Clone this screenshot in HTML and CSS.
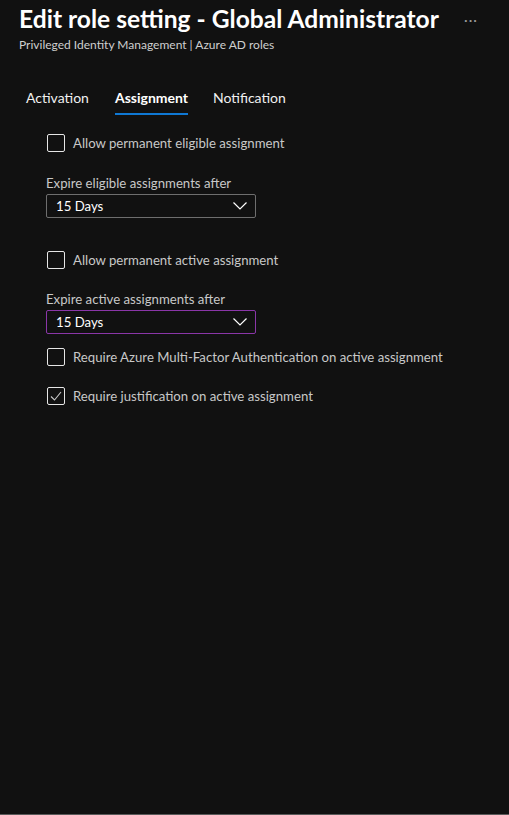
FILE: index.html
```html
<!DOCTYPE html>
<html>
<head>
<meta charset="utf-8">
<link rel="stylesheet" href="styles.css">
</head>
<body>
<div class="page">
  <header class="header">
    <div class="title-row">
      <h1 class="title">Edit role setting - Global Administrator</h1>
      <span class="more">&middot;&middot;&middot;</span>
    </div>
    <div class="subtitle">Privileged Identity Management | Azure AD roles</div>
  </header>

  <nav class="tabs">
    <span class="tab">Activation</span>
    <span class="tab active">Assignment</span>
    <span class="tab">Notification</span>
  </nav>

  <section class="form">
    <label class="check">
      <span class="box"></span>
      <span class="check-label">Allow permanent eligible assignment</span>
    </label>

    <div class="field">
      <div class="field-label">Expire eligible assignments after</div>
      <div class="select">
        <span>15 Days</span>
        <svg class="chev" width="14" height="8" viewBox="0 0 14 8"><path d="M0.5 0.5 L7 7 L13.5 0.5" fill="none" stroke="#fff" stroke-width="1.2"/></svg>
      </div>
    </div>

    <label class="check gap-top">
      <span class="box"></span>
      <span class="check-label">Allow permanent active assignment</span>
    </label>

    <div class="field field-tight">
      <div class="field-label">Expire active assignments after</div>
      <div class="select focused">
        <span>15 Days</span>
        <svg class="chev" width="14" height="8" viewBox="0 0 14 8"><path d="M0.5 0.5 L7 7 L13.5 0.5" fill="none" stroke="#fff" stroke-width="1.2"/></svg>
      </div>
    </div>

    <label class="check after-select">
      <span class="box"></span>
      <span class="check-label">Require Azure Multi-Factor Authentication on active assignment</span>
    </label>

    <label class="check next">
      <span class="box checked">
        <svg width="14" height="12" viewBox="0 0 14 12"><path d="M2 6.5 L5.5 10 L12 2" fill="none" stroke="#c8c8c8" stroke-width="1.1"/></svg>
      </span>
      <span class="check-label">Require justification on active assignment</span>
    </label>
  </section>
</div>
</body>
</html>
```

FILE: styles.css
```css
html, body {
  margin: 0;
  padding: 0;
  background: #111111;
}
body {
  font-family: "Lato", "Open Sans", sans-serif;
  color: #ffffff;
}
.page {
  height: 814px;
  border-bottom: 1px solid #5a5a5a;
  display: flex;
  flex-direction: column;
}
.header {
  padding: 3px 19px 0 19px;
}
.title-row {
  display: flex;
  align-items: center;
  justify-content: space-between;
}
.title {
  margin: 0;
  font-size: 24.6px;
  font-weight: 700;
  line-height: 32px;
  color: #ffffff;
}
.more {
  color: #9a9a9a;
  font-size: 14px;
  letter-spacing: 1px;
  margin-right: 12px;
  margin-top: 0;
}
.subtitle {
  font-size: 12px;
  line-height: 16px;
  color: #cfcfcf;
  margin-top: 2px;
}
.tabs {
  display: flex;
  margin-top: 35px;
  padding-left: 26px;
}
.tab {
  font-size: 14px;
  line-height: 20px;
  color: #f0f0f0;
  padding-bottom: 5px;
  margin-right: 25px;
  border-bottom: 2px solid transparent;
}
.tab:first-child {
  margin-right: 26px;
}
.tab.active {
  font-weight: 700;
  color: #ffffff;
  border-bottom-color: #0f78d4;
}
.form {
  padding-left: 47px;
  display: flex;
  flex-direction: column;
  margin-top: 19px;
}
.check {
  display: flex;
  align-items: center;
  gap: 8px;
  height: 18px;
}
.box {
  box-sizing: border-box;
  width: 18px;
  height: 18px;
  border: 1px solid #e6e6e6;
  border-radius: 2px;
  display: flex;
  align-items: center;
  justify-content: center;
}
.check-label {
  font-size: 13.2px;
  color: #c8c8c8;
}
.field {
  margin-top: 22px;
  margin-left: -1px;
}
.field-tight {
  margin-top: 21px;
}
.field-label {
  font-size: 13.2px;
  line-height: 18px;
  color: #c8c8c8;
}
.select {
  box-sizing: border-box;
  width: 210px;
  height: 24px;
  margin-top: 2px;
  border: 1px solid #6e6e6e;
  border-radius: 2px;
  display: flex;
  align-items: center;
  justify-content: space-between;
  padding: 0 8px 0 9px;
  font-size: 13.2px;
  color: #ffffff;
}
.select.focused {
  border-color: #8a36a8;
}
.chev {
  display: block;
}
.gap-top {
  margin-top: 33px;
}
.after-select {
  margin-top: 14px;
}
.next {
  margin-top: 21px;
}
```
